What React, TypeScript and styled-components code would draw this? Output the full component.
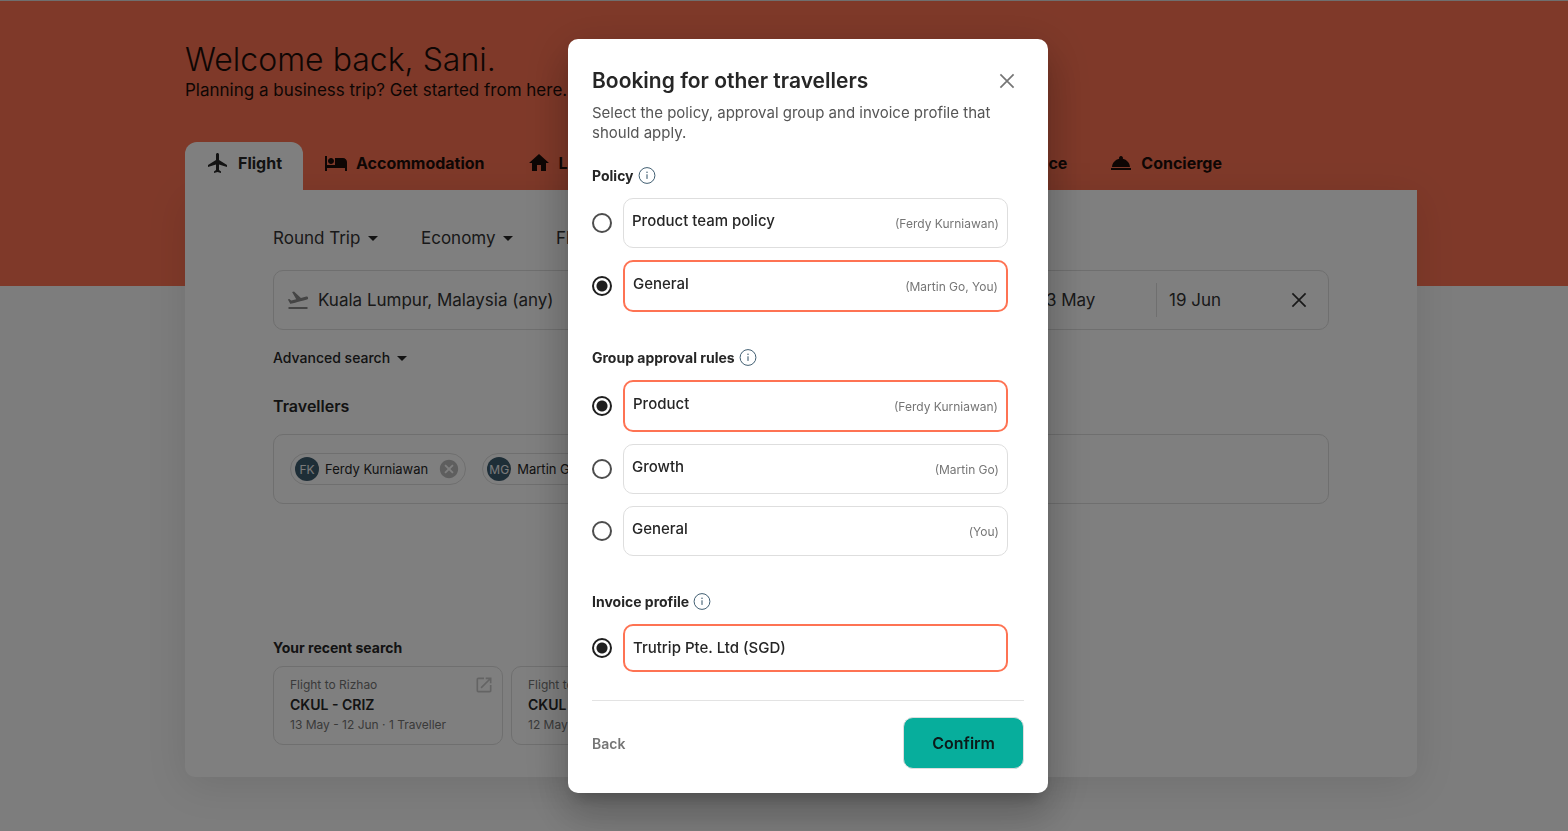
import React, { useState } from 'react';
import styled, { createGlobalStyle } from 'styled-components';
import {
  MdArrowDropDown,
  MdCancel,
  MdDirectionsCar,
  MdFlight,
  MdFlightLand,
  MdFlightTakeoff,
  MdHome,
  MdHotel,
  MdOpenInNew,
  MdRoomService,
} from 'react-icons/md';

const colors = {
  coral: '#fe7353',
  teal: '#07ae9c',
  navy: '#3d5c6f',
  ink: '#262626',
  text: '#333333',
  muted: '#757575',
  line: '#dedede',
  page: '#fafafa',
};

const GlobalStyle = createGlobalStyle`
  *, *::before, *::after { box-sizing: border-box; }
  body {
    margin: 0;
    background: ${colors.page};
    color: ${colors.ink};
    font-family: Inter, "Liberation Sans", sans-serif;
  }
  h1, h2, h3, p, fieldset, legend { margin: 0; padding: 0; border: 0; }
  button, input, select { font: inherit; color: inherit; }
  button { cursor: pointer; }
`;

/* ---------- Page ---------- */

const Page = styled.div`
  min-height: 100vh;
  padding: 40px 0 54px 34px;
  border-top: 1px solid ${colors.line};
  background: linear-gradient(${colors.coral}, ${colors.coral}) top / 100% 285px no-repeat ${colors.page};
`;

const Container = styled.div`
  max-width: 1232px;
  margin: 0 auto;
`;

const Greeting = styled.h1`
  font-size: 32px;
  font-weight: 300;
  line-height: 38px;
  color: #1c0d09;
`;

const Tagline = styled.p`
  margin-bottom: 41px;
  font-size: 17px;
  line-height: 22px;
  color: #1c0d09;
`;

const Tabs = styled.nav`
  display: flex;
  max-width: 1058px;
`;

const Tab = styled.button<{ $active?: boolean; $grow?: boolean }>`
  display: flex;
  flex: ${(p) => (p.$grow ? '1 1 0' : '0 0 auto')};
  align-items: center;
  gap: 8px;
  height: 48px;
  padding: 0 21px 6px;
  border: 0;
  border-radius: 12px 12px 0 0;
  background: ${(p) => (p.$active ? '#ffffff' : 'transparent')};
  color: ${(p) => (p.$active ? colors.ink : '#1c0d09')};
  font-size: 16px;
  font-weight: 700;
  white-space: nowrap;

  svg {
    flex: none;
    width: 24px;
    height: 24px;
  }
`;

const Panel = styled.main`
  padding: 32px 88px;
  border-radius: 0 0 10px 10px;
  background: #ffffff;
  box-shadow: 0 8px 40px rgba(0, 0, 0, 0.1);
`;

const Filters = styled.div`
  display: flex;
  gap: 36px;
  margin-bottom: 16px;
`;

const SelectWrap = styled.label`
  display: flex;
  align-items: center;
  height: 32px;

  svg {
    width: 24px;
    height: 24px;
    margin-left: -24px;
    pointer-events: none;
  }
`;

const Select = styled.select`
  appearance: none;
  padding: 0 24px 0 0;
  border: 0;
  background: none;
  font-size: 17px;
  line-height: 24px;
  color: ${colors.text};
`;

const SearchBar = styled.div`
  display: flex;
  align-items: center;
  height: 60px;
  padding: 0 12px;
  border: 1px solid ${colors.line};
  border-radius: 10px;
  font-size: 17px;
  color: ${colors.text};
`;

const Place = styled.label`
  display: flex;
  flex: 1;
  align-items: center;
  gap: 8px;
  min-width: 0;

  svg {
    flex: none;
    width: 24px;
    height: 24px;
    color: #8a8a8a;
  }
`;

const Field = styled.input`
  flex: 1;
  min-width: 0;
  width: 100%;
  padding: 0;
  border: 0;
  background: none;
  text-overflow: ellipsis;
`;

const DateField = styled.input`
  width: 130px;
  height: 34px;
  padding: 0 0 0 12px;
  border: 0;
  border-left: 1px solid ${colors.line};
  background: none;
`;

const IconButton = styled.button`
  display: flex;
  align-items: center;
  justify-content: center;
  flex: none;
  width: 34px;
  height: 36px;
  padding: 0;
  border: 0;
  background: none;

  svg {
    width: 24px;
    height: 24px;
  }
`;

const ClearButton = styled(IconButton)`
  margin-left: -4px;
`;

const AdvancedButton = styled.button`
  display: flex;
  align-items: center;
  margin: 16px 0 24px;
  padding: 0;
  border: 0;
  background: none;
  font-size: 14px;
  font-weight: 500;
  line-height: 24px;

  svg {
    width: 24px;
    height: 24px;
  }
`;

const Travellers = styled.section`
  min-height: 244px;
`;

const TravellersTitle = styled.h2`
  margin-bottom: 16px;
  font-size: 16px;
  font-weight: 600;
  line-height: 24px;
`;

const TravellerBox = styled.div`
  display: flex;
  flex-wrap: wrap;
  gap: 16px;
  padding: 18px 16px;
  border: 1px solid ${colors.line};
  border-radius: 10px;
`;

const Chip = styled.div`
  display: flex;
  align-items: center;
  height: 32px;
  padding: 0 5px 0 4px;
  border: 1px solid ${colors.line};
  border-radius: 16px;
  font-size: 13px;
  white-space: nowrap;
`;

const Avatar = styled.span`
  display: flex;
  align-items: center;
  justify-content: center;
  width: 24px;
  height: 24px;
  margin-right: 6px;
  border-radius: 50%;
  background: ${colors.navy};
  color: #f5f5f5;
  font-size: 12px;
`;

const ChipRemove = styled.button`
  display: flex;
  margin-left: 10px;
  padding: 0;
  border: 0;
  background: none;
  color: #bdbdbd;

  svg {
    width: 22px;
    height: 22px;
  }
`;

const RecentTitle = styled.h2`
  margin-bottom: 8px;
  font-size: 14px;
  font-weight: 700;
  line-height: 20px;
`;

const RecentList = styled.div`
  display: flex;
  gap: 8px;
`;

const RecentCard = styled.a`
  display: flex;
  flex: 0 0 230px;
  justify-content: space-between;
  padding: 8px 8px 9px 16px;
  border: 1px solid ${colors.line};
  border-radius: 10px;
  color: ${colors.muted};
  font-size: 12px;
  line-height: 20px;
  text-decoration: none;

  strong {
    display: block;
    color: ${colors.ink};
    font-size: 14px;
    font-weight: 600;
  }

  svg {
    flex: none;
    width: 20px;
    height: 20px;
    color: #c8c8c8;
  }
`;

/* ---------- Dialog ---------- */

const Overlay = styled.div`
  position: fixed;
  inset: 0;
  display: flex;
  padding: 1px 0 0 48px;
  overflow: auto;
  background: rgba(0, 0, 0, 0.5);
`;

const Dialog = styled.form`
  width: 100%;
  max-width: 480px;
  margin: auto;
  padding: 24px;
  border-radius: 10px;
  background: #ffffff;
  box-shadow:
    0 11px 15px -7px rgba(0, 0, 0, 0.2),
    0 24px 38px 3px rgba(0, 0, 0, 0.14),
    0 9px 46px 8px rgba(0, 0, 0, 0.12);
`;

const DialogHeader = styled.header`
  display: flex;
  justify-content: space-between;
  margin-bottom: 4px;
  color: ${colors.muted};
`;

const DialogTitle = styled.h2`
  color: ${colors.ink};
  font-size: 21px;
  font-weight: 600;
  line-height: 36px;
`;

const DialogText = styled.p`
  margin-bottom: 23px;
  color: #555555;
  font-size: 15px;
  line-height: 20px;
`;

const Group = styled.fieldset`
  display: flex;
  flex-direction: column;
  gap: 12px;
  min-width: 0;
  padding-right: 16px;

  & + & {
    margin-top: 36px;
  }
`;

const GroupTitle = styled.div`
  display: flex;
  align-items: center;
  gap: 4px;
  height: 20px;
  font-size: 14px;
  font-weight: 700;
  line-height: 20px;

  svg {
    width: 18px;
    height: 18px;
    color: #2c4d62;
  }
`;

const OptionRow = styled.label`
  display: flex;
  align-items: center;
  gap: 11px;
  cursor: pointer;
`;

const Radio = styled.input`
  appearance: none;
  flex: none;
  width: 20px;
  height: 20px;
  margin: 0;
  border: 2px solid #4d4d4d;
  border-radius: 50%;

  &:checked {
    border-color: #1f1f1f;
    background: radial-gradient(circle, #1f1f1f 5px, transparent 6px);
  }
`;

const OptionBox = styled.span<{ $selected: boolean }>`
  display: flex;
  flex: 1;
  justify-content: space-between;
  padding: 12px 8px;
  border: ${(p) => (p.$selected ? `2px solid ${colors.coral}` : `1px solid ${colors.line}`)};
  border-radius: 10px;
`;

const OptionName = styled.span`
  font-size: 15px;
  font-weight: 500;
  line-height: 20px;
`;

const OptionPeople = styled.span`
  padding: 3px 0 1px;
  color: ${colors.muted};
  font-size: 12px;
  line-height: 20px;
`;

const DialogFooter = styled.footer`
  display: flex;
  align-items: center;
  justify-content: space-between;
  margin-top: 28px;
  padding-top: 16px;
  border-top: 1px solid #e3e3e3;
`;

const BackButton = styled.button`
  padding: 0;
  border: 0;
  background: none;
  color: ${colors.muted};
  font-size: 14px;
  font-weight: 600;
`;

const ConfirmButton = styled.button`
  height: 52px;
  padding: 0 28px;
  border: 1px solid ${colors.line};
  border-radius: 10px;
  background: ${colors.teal};
  color: #0c1a19;
  font-size: 16px;
  font-weight: 600;
`;

const InfoIcon = () => (
  <svg viewBox="0 0 18 18" fill="none" stroke="currentColor" aria-hidden="true">
    <circle cx="9" cy="8.5" r="7.9" strokeWidth="0.9" />
    <path d="M9 7.3v4.6" strokeWidth="1" />
    <circle cx="9" cy="5.2" r="0.7" fill="currentColor" stroke="none" />
  </svg>
);

const CrossIcon = () => (
  <svg viewBox="0 0 24 24" fill="none" stroke="currentColor" strokeWidth="1.7" aria-hidden="true">
    <path d="M5.4 5.4l13.2 13.2M18.6 5.4L5.4 18.6" />
  </svg>
);

type Option = { name: string; people?: string };

const groups: { id: string; title: string; initial: number; options: Option[] }[] = [
  {
    id: 'policy',
    title: 'Policy',
    initial: 1,
    options: [
      { name: 'Product team policy', people: '(Ferdy Kurniawan)' },
      { name: 'General', people: '(Martin Go, You)' },
    ],
  },
  {
    id: 'approval',
    title: 'Group approval rules',
    initial: 0,
    options: [
      { name: 'Product', people: '(Ferdy Kurniawan)' },
      { name: 'Growth', people: '(Martin Go)' },
      { name: 'General', people: '(You)' },
    ],
  },
  {
    id: 'invoice',
    title: 'Invoice profile',
    initial: 0,
    options: [{ name: 'Trutrip Pte. Ltd (SGD)' }],
  },
];

function OptionGroup({ id, title, initial, options }: (typeof groups)[number]) {
  const [selected, setSelected] = useState(initial);
  return (
    <Group role="radiogroup" aria-labelledby={`${id}-title`}>
      <GroupTitle id={`${id}-title`}>
        {title}
        <InfoIcon />
      </GroupTitle>
      {options.map((option, i) => (
        <OptionRow key={option.name}>
          <Radio type="radio" name={id} checked={selected === i} onChange={() => setSelected(i)} />
          <OptionBox $selected={selected === i}>
            <OptionName>{option.name}</OptionName>
            {option.people && <OptionPeople>{option.people}</OptionPeople>}
          </OptionBox>
        </OptionRow>
      ))}
    </Group>
  );
}

function FilterSelect({ label, value }: { label: string; value: string }) {
  return (
    <SelectWrap>
      <Select aria-label={label} defaultValue={value}>
        <option>{value}</option>
      </Select>
      <MdArrowDropDown />
    </SelectWrap>
  );
}

function Traveller({ initials, name }: { initials: string; name: string }) {
  return (
    <Chip>
      <Avatar>{initials}</Avatar>
      {name}
      <ChipRemove type="button" aria-label={`Remove ${name}`}>
        <MdCancel />
      </ChipRemove>
    </Chip>
  );
}

function Recent({ to, route, details }: { to: string; route: string; details: string }) {
  return (
    <RecentCard href="#">
      <span>
        {to}
        <strong>{route}</strong>
        {details}
      </span>
      <MdOpenInNew />
    </RecentCard>
  );
}

export default function App() {
  return (
    <>
      <GlobalStyle />
      <Page>
        <Container>
          <Greeting>Welcome back, Sani.</Greeting>
          <Tagline>Planning a business trip? Get started from here.</Tagline>
          <Tabs>
            <Tab $active><MdFlight />Flight</Tab>
            <Tab><MdHotel />Accommodation</Tab>
            <Tab $grow><MdHome />Long Stays</Tab>
            <Tab><MdDirectionsCar />Insurance</Tab>
            <Tab><MdRoomService />Concierge</Tab>
          </Tabs>
          <Panel>
            <Filters>
              <FilterSelect label="Trip type" value="Round Trip" />
              <FilterSelect label="Cabin" value="Economy" />
              <FilterSelect label="Fare" value="Flexible" />
            </Filters>
            <SearchBar>
              <Place>
                <MdFlightTakeoff />
                <Field aria-label="From" defaultValue="Kuala Lumpur, Malaysia (any)" />
              </Place>
              <Place>
                <MdFlightLand />
                <Field aria-label="To" defaultValue="Singapore" />
              </Place>
              <DateField aria-label="Departure" defaultValue="13 May" />
              <DateField aria-label="Return" defaultValue="19 Jun" />
              <ClearButton type="button" aria-label="Clear search">
                <CrossIcon />
              </ClearButton>
            </SearchBar>
            <AdvancedButton type="button">
              Advanced search
              <MdArrowDropDown />
            </AdvancedButton>
            <Travellers>
              <TravellersTitle>Travellers</TravellersTitle>
              <TravellerBox>
                <Traveller initials="FK" name="Ferdy Kurniawan" />
                <Traveller initials="MG" name="Martin Go" />
              </TravellerBox>
            </Travellers>
            <RecentTitle>Your recent search</RecentTitle>
            <RecentList>
              <Recent to="Flight to Rizhao" route="CKUL - CRIZ" details="13 May - 12 Jun · 1 Traveller" />
              <Recent to="Flight to Rizhao" route="CKUL - CRIZ" details="12 May - 12 Jun · 1 Traveller" />
            </RecentList>
          </Panel>
        </Container>
      </Page>
      <Overlay>
        <Dialog role="dialog" aria-modal="true" aria-labelledby="dialog-title" onSubmit={(e) => e.preventDefault()}>
          <DialogHeader>
            <DialogTitle id="dialog-title">Booking for other travellers</DialogTitle>
            <IconButton type="button" aria-label="Close">
              <CrossIcon />
            </IconButton>
          </DialogHeader>
          <DialogText>
            Select the policy, approval group and invoice profile that should apply.
          </DialogText>
          {groups.map((group) => (
            <OptionGroup key={group.id} {...group} />
          ))}
          <DialogFooter>
            <BackButton type="button">Back</BackButton>
            <ConfirmButton type="submit">Confirm</ConfirmButton>
          </DialogFooter>
        </Dialog>
      </Overlay>
    </>
  );
}
